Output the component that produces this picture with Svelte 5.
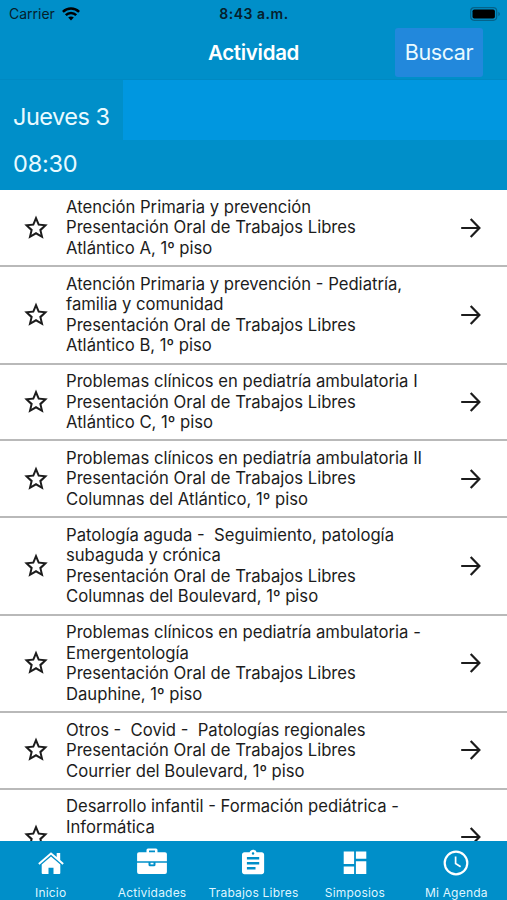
<script lang="ts">
  interface Activity {
    title: string[];
    room: string;
  }

  const kind = 'Presentación Oral de Trabajos Libres';

  const activities: Activity[] = [
    { title: ['Atención Primaria y prevención'], room: 'Atlántico A, 1º piso' },
    {
      title: ['Atención Primaria y prevención - Pediatría,', 'familia y comunidad'],
      room: 'Atlántico B, 1º piso'
    },
    { title: ['Problemas clínicos en pediatría ambulatoria I'], room: 'Atlántico C, 1º piso' },
    {
      title: ['Problemas clínicos en pediatría ambulatoria II'],
      room: 'Columnas del Atlántico, 1º piso'
    },
    {
      title: ['Patología aguda -  Seguimiento, patología', 'subaguda y crónica'],
      room: 'Columnas del Boulevard, 1º piso'
    },
    {
      title: ['Problemas clínicos en pediatría ambulatoria -', 'Emergentología'],
      room: 'Dauphine, 1º piso'
    },
    { title: ['Otros -  Covid -  Patologías regionales'], room: 'Courrier del Boulevard, 1º piso' }
  ];

  // Last row, only partly scrolled into view
  const next = ['Desarrollo infantil - Formación pediátrica -', 'Informática'];

  const tabs = [
    { id: 'home', label: 'Inicio' },
    { id: 'activities', label: 'Actividades' },
    { id: 'papers', label: 'Trabajos Libres' },
    { id: 'symposia', label: 'Simposios' },
    { id: 'agenda', label: 'Mi Agenda' }
  ];

  let starred: boolean[] = $state([...activities, next].map(() => false));

  function toggleStar(index: number) {
    starred[index] = !starred[index];
  }
</script>

{#snippet row(lines: string[], i: number)}
  <article>
    <button class="star" aria-label="Favorito" aria-pressed={starred[i]} onclick={() => toggleStar(i)}>
      <svg width="30" height="30" viewBox="0 0 24 24" fill="#1c1c1c">
        {#if starred[i]}
          <path d="M12 17.27 18.18 21l-1.64-7.03L22 9.24l-7.19-.61L12 2 9.19 8.63 2 9.24l5.46 4.73L5.82 21z" />
        {:else}
          <path
            d="m21.4 9.24-6.7-.62L12 2 9.3 8.63 2.6 9.24l5 4.73L6 20.6l6-3.5 6 3.5-1.6-6.63 5-4.73zM12 15.2l-3.6 2.17 1-4.08-3.16-2.85 4.16-.38L12 6.2l1.6 3.86 4.16.38-3.16 2.85 1 4.08L12 15.2z"
          />
        {/if}
      </svg>
    </button>
    <div class="info">
      {#each lines as line}
        <p>{line}</p>
      {/each}
    </div>
    <svg class="arrow" width="24" height="24" viewBox="0 0 24 24">
      <path d="M2.2 12h18M11.7 3l8.7 9-8.7 9" />
    </svg>
  </article>
{/snippet}

<div class="app">
  <header>
    <div class="status-bar">
      <div class="carrier">
        <span>Carrier</span>
        <svg width="18" height="14" viewBox="0 0 18 14" fill="none" stroke="#000" stroke-width="2.5">
          <path d="M.9 4.8a11.5 11.5 0 0 1 16.2 0" />
          <path d="M3.8 8.2a7.3 7.3 0 0 1 10.4 0" />
          <path d="M6.2 10.6a3.9 3.9 0 0 1 5.6 0L9 13.5z" fill="#000" stroke="none" />
        </svg>
      </div>
      <span class="clock">8:43 a.m.</span>
      <svg class="battery" width="31" height="14" viewBox="0 0 31 14">
        <rect x=".7" y=".7" width="26" height="12.6" rx="3.5" fill="none" stroke="#05638a" stroke-width="1.2" />
        <rect x="2.5" y="2.4" width="22.4" height="9.2" rx="1.8" />
        <path d="M28.4 4.8c2 .8 2 3.6 0 4.4z" fill="#05638a" />
      </svg>
    </div>
    <div class="nav-bar">
      <h1>Actividad</h1>
      <button class="search">Buscar</button>
    </div>
  </header>

  <div class="days">
    <button class="day">Jueves 3</button>
  </div>
  <div class="hour">08:30</div>

  <main>
    {#each activities as activity, i}
      {@render row([...activity.title, kind, activity.room], i)}
    {/each}
    <div class="partial">
      {@render row(next, activities.length)}
    </div>
  </main>

  <nav>
    {#each tabs as tab}
      <button class="tab">
        <svg width="32" height="32" viewBox="0 0 32 32" fill="#fff">
          {#if tab.id === 'home'}
            <path d="M16 5.2 3.2 16.2l1.3 1.5L16 7.8l11.5 9.9 1.3-1.5-3.6-3.1V6h-3.5v4.1z" />
            <path d="M16 9.5 6.7 17.4V26a1 1 0 0 0 1 1h5.8v-6.3h5V27h5.8a1 1 0 0 0 1-1v-8.6z" />
          {:else if tab.id === 'activities'}
            <path
              fill-rule="evenodd"
              d="M10.5 5.2V3A1.5 1.5 0 0 1 12 1.5h8A1.5 1.5 0 0 1 21.5 3v2.2H29A1.9 1.9 0 0 1 30.9 7.1v7.2H1.1V7.1A1.9 1.9 0 0 1 3 5.2zM13 5.2h6V3.5h-6z"
            />
            <path d="M1.1 15.8h11.4v2a1.5 1.5 0 0 0 1.5 1.5h4a1.5 1.5 0 0 0 1.5-1.5v-2h11.4V25a1.9 1.9 0 0 1-1.9 1.9H3A1.9 1.9 0 0 1 1.1 25z" />
            <path d="M14.5 15.8h3v1.6h-3z" />
          {:else if tab.id === 'papers'}
            <path
              transform="translate(1.3 1.5) scale(1.23)"
              d="M19 3h-4.18C14.4 1.84 13.3 1 12 1c-1.3 0-2.4.84-2.82 2H5c-1.1 0-2 .9-2 2v14c0 1.1.9 2 2 2h14c1.1 0 2-.9 2-2V5c0-1.1-.9-2-2-2zm-7 0c.55 0 1 .45 1 1s-.45 1-1 1-1-.45-1-1 .45-1 1-1zm2 14H7v-2h7v2zm3-4H7v-2h10v2zm0-4H7V7h10v2z"
            />
          {:else if tab.id === 'symposia'}
            <path d="M4.7 4.5h10.4v12.6H4.7zM16.9 4.5h10.4v7.2H16.9zM4.7 19.5h10.4v7.4H4.7zM16.9 14.3h10.4v12.6H16.9z" />
          {:else}
            <circle cx="16" cy="16" r="11.3" fill="none" stroke="#fff" stroke-width="2.2" />
            <path d="M15.6 9.5v7l5 3.2" fill="none" stroke="#fff" stroke-width="1.7" />
          {/if}
        </svg>
        <span>{tab.label}</span>
      </button>
    {/each}
  </nav>
</div>

<style>
  :global(body) {
    margin: 0;
    background: #fff;
  }

  .app {
    display: flex;
    flex-direction: column;
    height: 900px;
    overflow: hidden;
    font-family: Inter, 'Liberation Sans', sans-serif;
    color: #1c1c1c;
  }

  button {
    border: none;
    padding: 0;
    background: none;
    font: inherit;
    color: inherit;
  }

  header {
    flex: none;
    height: 80px;
    box-sizing: border-box;
    background: #008fc9;
    border-bottom: 1px solid #0089c2;
  }

  .status-bar {
    display: grid;
    grid-template-columns: 1fr auto 1fr;
    align-items: center;
    height: 27px;
    padding: 0 6px 0 9px;
    color: #05202c;
    font-size: 14px;
  }

  .carrier {
    display: flex;
    align-items: center;
    gap: 7px;
  }

  .clock {
    margin-right: 2px;
    font-weight: 600;
    letter-spacing: 0.5px;
  }

  .battery {
    justify-self: end;
  }

  .nav-bar {
    display: grid;
    grid-template-columns: 1fr auto 1fr;
    align-items: center;
    height: 50px;
    padding: 0 24px;
    color: #fff;
  }

  h1 {
    grid-column: 2;
    margin: 0;
    font-size: 20.5px;
    font-weight: 600;
    letter-spacing: -0.3px;
  }

  .search {
    justify-self: end;
    width: 88px;
    height: 49px;
    border-radius: 3px;
    background: #2288dc;
    color: #e9faff;
    font-size: 21.5px;
    letter-spacing: -0.4px;
  }

  .days {
    flex: none;
    height: 60px;
    background: #0097e0;
  }

  .day {
    width: 123px;
    height: 60px;
    padding: 13px 0 0 13px;
    background: #008fc9;
    color: #e9faff;
    font-size: 23.5px;
    letter-spacing: -0.5px;
    text-align: left;
  }

  .hour {
    flex: none;
    height: 50.3px;
    padding-left: 13px;
    background: #008fc9;
    color: #e9faff;
    font-size: 23.5px;
    letter-spacing: -0.2px;
    line-height: 47px;
  }

  main {
    flex: 1;
    min-height: 0;
    overflow: hidden;
  }

  article {
    display: flex;
    align-items: center;
    padding: 6.6px 24px 6.6px 21px;
    border-bottom: 2px solid #b9b9b9;
  }

  .partial article {
    align-items: flex-start;
    border-bottom: none;
    padding-bottom: 0;
  }

  .partial .star {
    margin-top: 26px;
  }

  .partial .arrow {
    margin-top: 29px;
  }

  .star {
    display: flex;
    margin-right: 15px;
  }

  .info {
    flex: 1;
    font-size: 16.65px;
    line-height: 20.55px;
  }

  p {
    margin: 0;
    white-space: pre;
  }

  .arrow {
    flex: none;
    fill: none;
    stroke: #1c1c1c;
    stroke-width: 2.2;
  }

  nav {
    position: relative;
    flex: none;
    display: grid;
    grid-template-columns: repeat(5, 1fr);
    height: 59.5px;
    background: #008fc9;
  }

  .tab {
    display: flex;
    flex-direction: column;
    align-items: center;
    justify-content: flex-start;
    padding-top: 6px;
    color: #dff5ff;
    font-size: 12px;
    white-space: nowrap;
  }

  .tab span {
    margin-top: 6px;
    line-height: 15px;
    letter-spacing: 0.2px;
  }
</style>
